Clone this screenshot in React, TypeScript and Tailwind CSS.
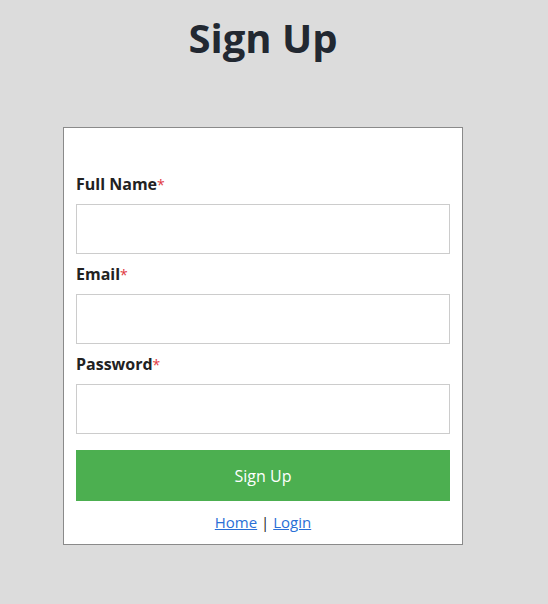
import React from 'react';

const Field: React.FC<{ label: string; type?: string }> = ({ label, type = 'text' }) => (
    <div className="mb-2">
        <label className="block h-6 leading-6 text-base font-bold text-[#222] mb-2">
            {label}
            <span className="text-[#e0383e] font-normal text-[14px]">*</span>
        </label>
        <input type={type} className="block w-full h-[50px] bg-white border border-[#cccccc] outline-none px-2" />
    </div>
);

const App: React.FC = () => {
    return (
        <div className="min-h-[604px] bg-[#dcdcdc] font-['Open_Sans',sans-serif]">
            <div className="w-[526px]">
                <h1 className="text-center text-[40px] leading-[56px] font-bold text-[#222831] pt-[10px]">Sign Up</h1>
                <div className="mx-auto mt-[61px] w-[400px] bg-white border border-[#8a8a8a] px-3 pt-11 pb-[10px]">
                    <form>
                        <Field label="Full Name" />
                        <Field label="Email" type="email" />
                        <Field label="Password" type="password" />
                        <button type="button" className="mt-2 w-full h-[51px] bg-[#4caf50] text-white text-base">
                            Sign Up
                        </button>
                        <p className="mt-[9px] text-center text-[15px] leading-6 text-[#222]">
                            <a href="#" className="text-[#2a6fd6] underline">Home</a> | <a href="#" className="text-[#2a6fd6] underline">Login</a>
                        </p>
                    </form>
                </div>
            </div>
        </div>
    );
};

export default App;
